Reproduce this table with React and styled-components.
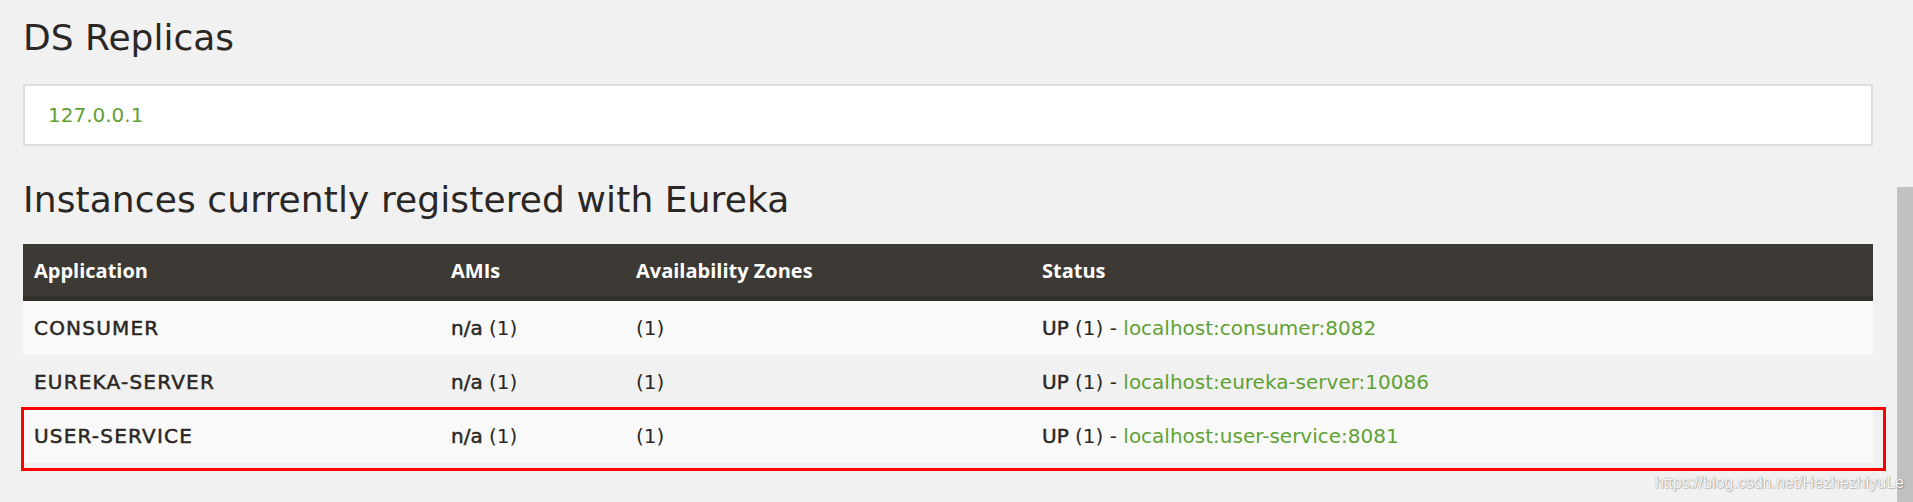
import styled, { createGlobalStyle } from 'styled-components';

const instances = [
    { name: 'CONSUMER', link: 'localhost:consumer:8082' },
    { name: 'EUREKA-SERVER', link: 'localhost:eureka-server:10086' },
    { name: 'USER-SERVICE', link: 'localhost:user-service:8081' },
];

export default function App() {
    return (
        <Page>
            <GlobalStyle />
            <Title>DS Replicas</Title>
            <ReplicaBox>
                <GreenLink href="#">127.0.0.1</GreenLink>
            </ReplicaBox>
            <SubTitle>Instances currently registered with Eureka</SubTitle>
            <TableWrap>
                <Table>
                    <colgroup>
                        <col style={{ width: 417 }} />
                        <col style={{ width: 185 }} />
                        <col style={{ width: 406 }} />
                        <col />
                    </colgroup>
                    <thead>
                        <tr>
                            <Th>Application</Th>
                            <Th>AMIs</Th>
                            <Th>Availability Zones</Th>
                            <Th>Status</Th>
                        </tr>
                    </thead>
                    <tbody>
                        {instances.map((inst, i) =>
                            <Row key={inst.name} $odd={i % 2 === 0}>
                                <Td><AppName>{inst.name}</AppName></Td>
                                <Td><b>n/a</b> (1)</Td>
                                <Td>(1)</Td>
                                <Td><b>UP</b> (1) - <GreenLink href="#">{inst.link}</GreenLink></Td>
                            </Row>
                        )}
                    </tbody>
                </Table>
                <Highlight />
            </TableWrap>
            <ScrollThumb />
            <Watermark>https://blog.csdn.net/HezhezhiyuLe</Watermark>
        </Page>
    );
}

const GlobalStyle = createGlobalStyle`
    body {
        margin: 0;
        background: #f1f1f1;
        font-family: "DejaVu Sans", "Open Sans", sans-serif;
        color: #2b2724;
        overflow: hidden;
    }
`;

const Page = styled.div`
    position: relative;
    height: 502px;
    box-sizing: border-box;
    padding: 15px 40px 0 23px;
`;

const Title = styled.h2`
    margin: 0;
    font-size: 36px;
    font-weight: 400;
    line-height: 45px;
`;

const SubTitle = styled.h2`
    margin: 32px 0 0;
    font-size: 36px;
    font-weight: 400;
    line-height: 43px;
    letter-spacing: 0.1px;
`;

const ReplicaBox = styled.div`
    margin-top: 24px;
    height: 62px;
    box-sizing: border-box;
    border: 2px solid #dedede;
    background: #fff;
    padding: 0 23px;
    display: flex;
    align-items: center;
    font-size: 20px;
`;

const GreenLink = styled.a`
    color: #5fa134;
    text-decoration: none;
`;

const TableWrap = styled.div`
    position: relative;
    margin-top: 23px;
`;

const Table = styled.table`
    width: 100%;
    border-collapse: collapse;
    table-layout: fixed;
    font-size: 20px;
`;

const Th = styled.th`
    height: 52px;
    padding: 0 11px;
    background: #3d3935;
    border-bottom: 5px solid #322e2a;
    color: #fff;
    font-family: "Open Sans", sans-serif;
    font-size: 20px;
    font-weight: 700;
    text-align: left;
`;

const Row = styled.tr`
    background: ${p => p.$odd ? '#f9f9f9' : 'transparent'};
    & + & td {
        border-top: 1px solid #3a3632;
    }
`;

const Td = styled.td`
    height: 54px;
    padding: 0 11px;
    b {
        font-weight: 400;
        -webkit-text-stroke: 0.5px currentColor;
    }
`;

const AppName = styled.b`
    letter-spacing: 1.2px;
`;

const Highlight = styled.div`
    position: absolute;
    top: 163px;
    left: -2px;
    right: -13px;
    height: 64px;
    box-sizing: border-box;
    border: 3px solid #ff0000;
    pointer-events: none;
`;

const Watermark = styled.div`
    position: absolute;
    right: 9px;
    bottom: 10px;
    font-family: "Liberation Sans", Arial, sans-serif;
    font-size: 16px;
    color: #fafafa;
    text-shadow: 0 0 1px rgba(0, 0, 0, 0.45), 1px 1px 1px rgba(0, 0, 0, 0.2);
`;

const ScrollThumb = styled.div`
    position: absolute;
    top: 187px;
    right: 0;
    bottom: 0;
    width: 16px;
    background: #c1c1c1;
`;
